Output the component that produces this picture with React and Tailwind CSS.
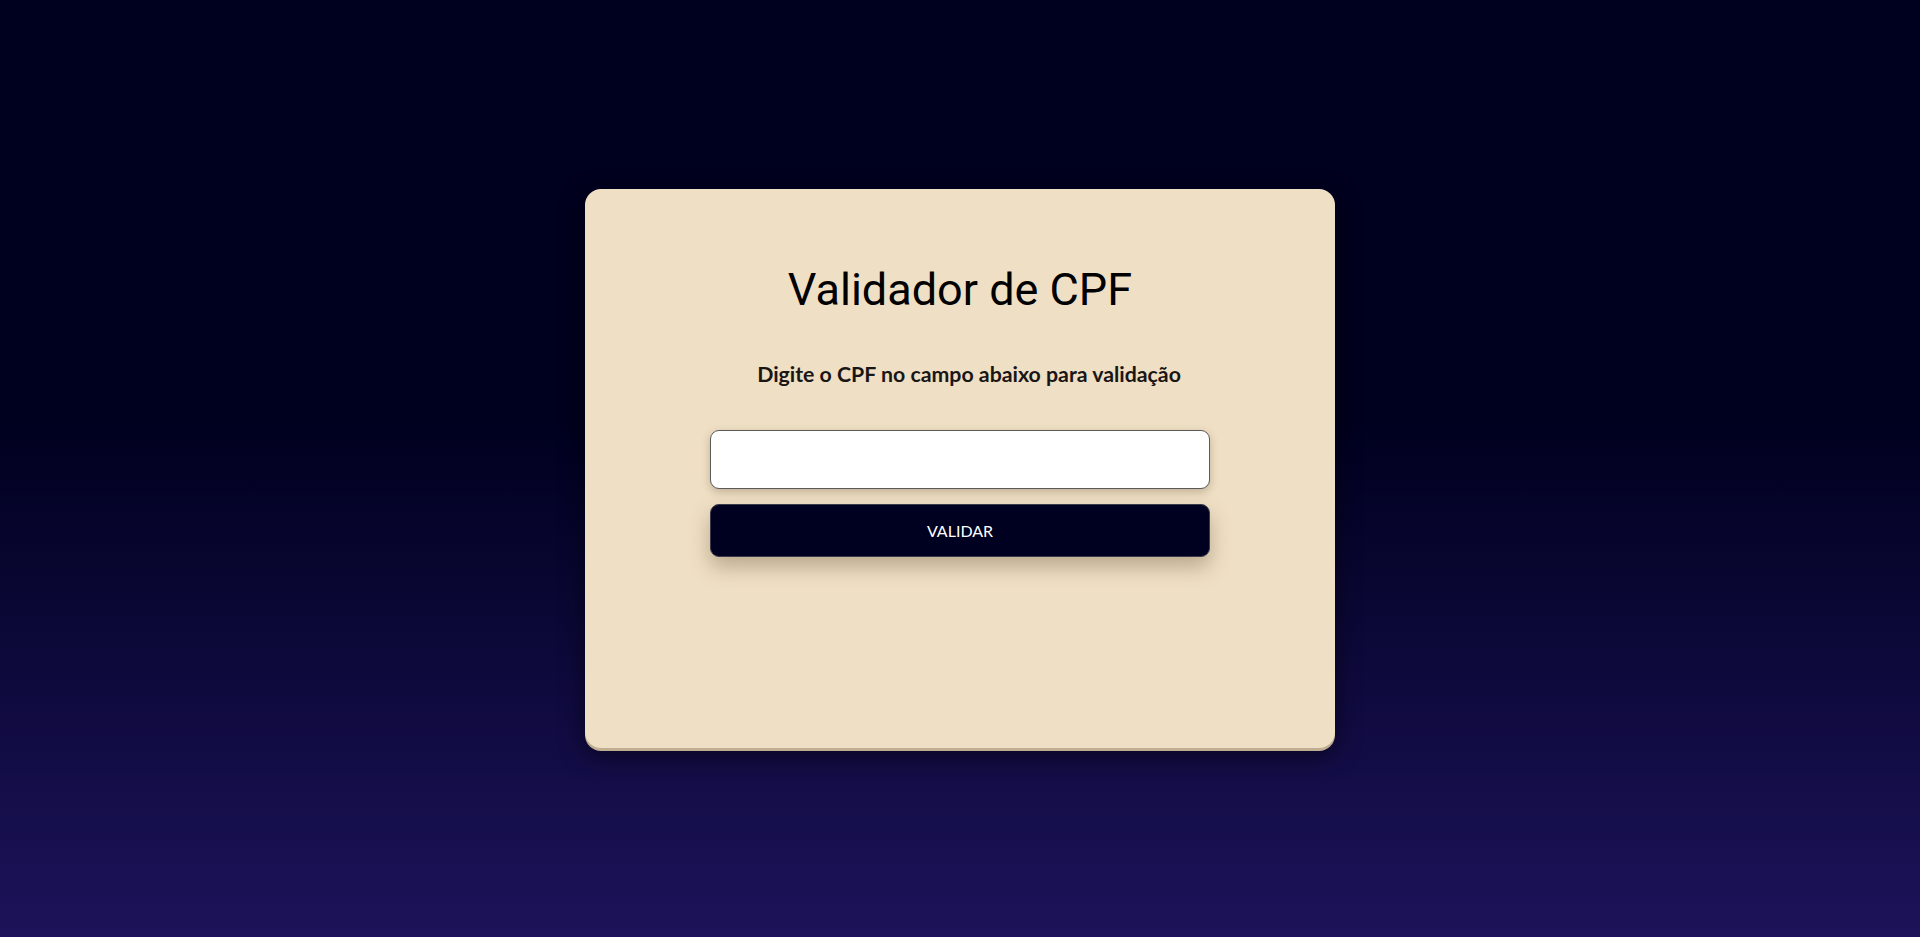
import { useState } from "react";

function App() {
  const [cpf, setCpf] = useState("");

  const handleSubmit = (e) => {
    e.preventDefault();
  };

  return (
    <div className="min-h-screen w-full flex items-center justify-center bg-[linear-gradient(to_bottom,#00001f_0%,#00001f_45%,#1c135a_100%)]">
      <div className="w-[750px] h-[559px] rounded-[16px] bg-[#efdfc4] flex flex-col items-center pt-[67px] shadow-[0_3px_0_#bfae91,0_8px_24px_rgba(0,0,0,0.55)]">
        <h1 className="font-['Roboto',sans-serif] text-[45px] leading-normal text-black">
          Validador de CPF
        </h1>

        <p className="mt-[38px] pl-[18px] font-['Lato','Open_Sans',sans-serif] text-[21.3px] font-bold leading-[1.2] text-[#1a1616]">
          Digite o CPF no campo abaixo para validação
        </p>

        <form onSubmit={handleSubmit} className="mt-[43px] flex flex-col gap-[15px]">
          <input
            type="text"
            value={cpf}
            onChange={(e) => setCpf(e.target.value)}
            className="w-[500px] h-[59px] rounded-[9px] border border-[#5a5a5a] bg-white px-4 text-lg outline-none shadow-[0_3px_8px_rgba(90,70,40,0.3)]"
          />

          <button
            type="submit"
            className="w-[500px] h-[53px] rounded-[9px] border border-[#3a3a4a] bg-[#000020] font-['Lato','Open_Sans',sans-serif] text-[16px] text-white shadow-[0_10px_20px_rgba(90,70,40,0.35)]"
          >
            VALIDAR
          </button>
        </form>
      </div>
    </div>
  );
}

export default App;
